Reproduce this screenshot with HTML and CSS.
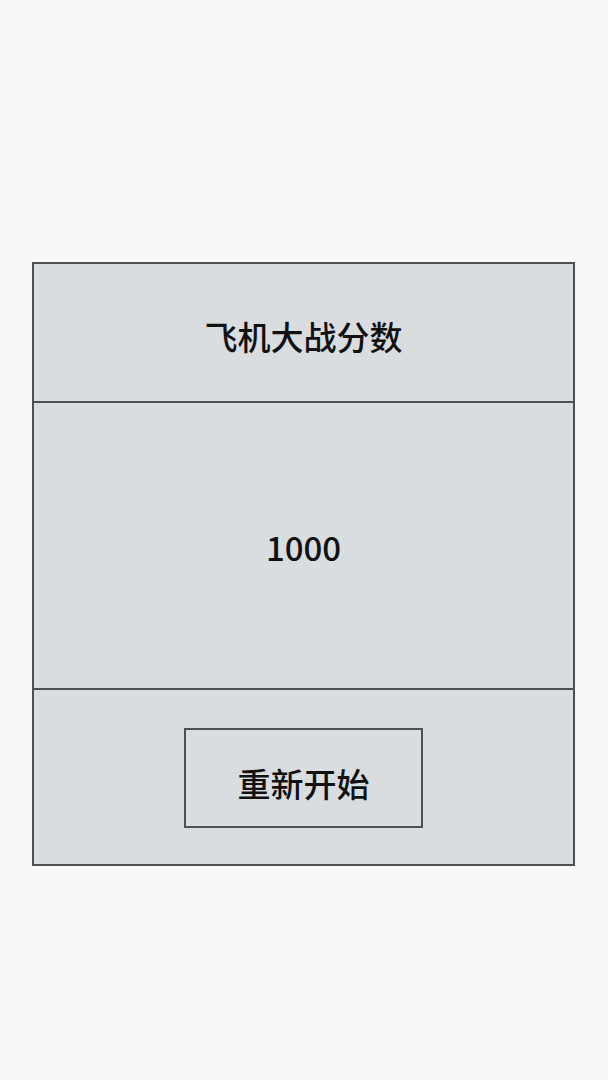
FILE: index.html
```html
<!DOCTYPE html>
<html lang="zh-CN">
<head>
<meta charset="utf-8">
<title>飞机大战分数</title>
<link rel="stylesheet" href="styles.css">
</head>
<body>
  <div class="score-card">
    <div class="score-title">飞机大战分数</div>
    <div class="score-value">1000</div>
    <div class="score-actions">
      <button class="restart-btn" type="button">重新开始</button>
    </div>
  </div>
</body>
</html>
```
FILE: styles.css
```css
html, body {
  margin: 0;
  padding: 0;
}

body {
  background: #f8f8f8;
  font-family: "Noto Sans CJK SC", "Noto Sans", sans-serif;
  color: #111;
}

.score-card {
  box-sizing: border-box;
  width: 543px;
  margin: 262px 0 0 32px;
  border: 2px solid #505050;
  background: #d9dde0;
  display: flex;
  flex-direction: column;
}

.score-title,
.score-value,
.score-actions {
  display: flex;
  align-items: center;
  justify-content: center;
  font-weight: 500;
}

.score-title {
  box-sizing: border-box;
  height: 139px;
  padding-top: 6px;
  border-bottom: 2px solid #505050;
  font-size: 33px;
}

.score-value {
  box-sizing: border-box;
  height: 287px;
  padding-top: 2px;
  border-bottom: 2px solid #505050;
  font-size: 33px;
}

.score-actions {
  height: 174px;
}

.restart-btn {
  box-sizing: border-box;
  width: 239px;
  height: 100px;
  margin-top: 2px;
  padding: 10px 0 0;
  border: 2px solid #505050;
  background: #d9dde0;
  color: #111;
  font-family: inherit;
  font-weight: 500;
  font-size: 33px;
}
```
